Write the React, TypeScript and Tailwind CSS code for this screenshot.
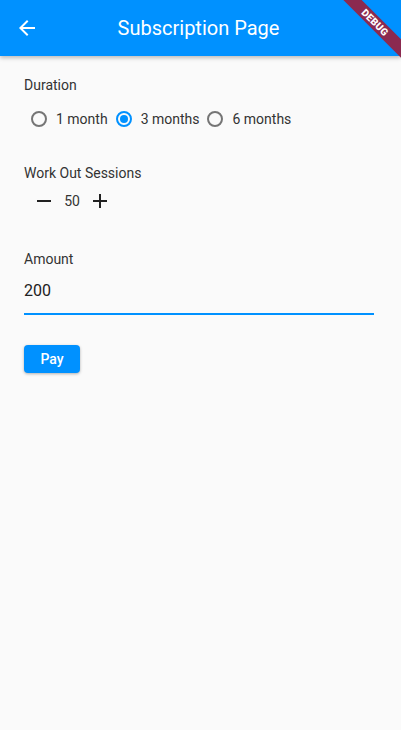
import { useState } from "react";

const durations = ["1 month", "3 months", "6 months"];

const BLUE = "bg-[#0091ff]";

function Radio({ checked }: { checked: boolean }) {
  return (
    <span className="flex h-[30px] w-[30px] items-center justify-center">
      <span
        className={
          checked
            ? "flex h-[16px] w-[16px] items-center justify-center rounded-full border-2 border-[#0091ff]"
            : "h-[16px] w-[16px] rounded-full border-2 border-[#757575]"
        }
      >
        {checked && <span className="h-[8px] w-[8px] rounded-full bg-[#0091ff]" />}
      </span>
    </span>
  );
}

export default function App() {
  const [duration, setDuration] = useState("3 months");
  const [sessions, setSessions] = useState(50);

  return (
    <div
      className="relative min-h-[730px] w-full overflow-hidden bg-[#fafafa] text-[14px] text-[#333]"
      style={{ fontFamily: "Roboto, 'Liberation Sans', sans-serif" }}
    >
      {/* App bar */}
      <header className={`relative z-10 flex h-[56px] items-center ${BLUE} shadow-[0_2px_4px_rgba(0,0,0,0.25)]`}>
        <button className="flex h-[56px] w-[54px] items-center justify-center text-white">
          <svg width="24" height="24" viewBox="0 0 24 24" fill="currentColor">
            <path d="M20 11H7.83l5.59-5.59L12 4l-8 8 8 8 1.41-1.41L7.83 13H20v-2z" />
          </svg>
        </button>
        <h1 className="pointer-events-none absolute left-0 right-[4px] text-center text-[20px] text-white">
          Subscription Page
        </h1>
      </header>

      {/* Debug banner */}
      <div className="pointer-events-none absolute right-0 top-0 z-20 h-[80px] w-[80px] overflow-hidden">
        <div className="absolute left-[-6px] top-[16px] flex h-[13px] w-[120px] rotate-45 items-center justify-center bg-[#8b2a50]">
          <span className="text-[10px] font-black leading-none tracking-[0.3px] text-white">DEBUG</span>
        </div>
      </div>

      <main className="flex flex-col pl-[24px] pr-[27px] pt-[19px]">
        <p className="h-[20px] leading-[20px]">Duration</p>

        <div className="mt-[9px] flex items-center gap-[1px]">
          {durations.map((d) => (
            <button
              key={d}
              onClick={() => setDuration(d)}
              className="flex items-center gap-[2px]"
            >
              <Radio checked={duration === d} />
              <span>{d}</span>
            </button>
          ))}
        </div>

        <p className="mt-[29px] h-[20px] leading-[20px]">Work Out Sessions</p>

        <div className="mt-[6px] flex h-[24px] items-center pl-[8px]">
          <button onClick={() => setSessions(sessions - 1)} className="text-[#212121]">
            <svg width="24" height="24" viewBox="0 0 24 24" fill="currentColor">
              <path d="M19 13H5v-2h14v2z" />
            </svg>
          </button>
          <span className="mx-[8px] w-[16px] text-center">{sessions}</span>
          <button onClick={() => setSessions(sessions + 1)} className="text-[#212121]">
            <svg width="24" height="24" viewBox="0 0 24 24" fill="currentColor">
              <path d="M19 13h-6v6h-2v-6H5v-2h6V5h2v6h6v2z" />
            </svg>
          </button>
        </div>

        <p className="mt-[36px] h-[20px] leading-[20px]">Amount</p>

        <div className="mt-[10px] border-b-2 border-[#0091ff] pb-[10px]">
          <input
            defaultValue="200"
            className="h-[24px] w-full bg-transparent text-[16px] leading-[24px] text-[#212121] outline-none"
          />
        </div>

        <div className="mt-[30px]">
          <button
            className={`h-[28px] w-[56px] rounded-[4px] ${BLUE} text-[14px] font-medium text-white shadow-[0_1px_3px_rgba(0,0,0,0.3)]`}
          >
            Pay
          </button>
        </div>
      </main>
    </div>
  );
}
